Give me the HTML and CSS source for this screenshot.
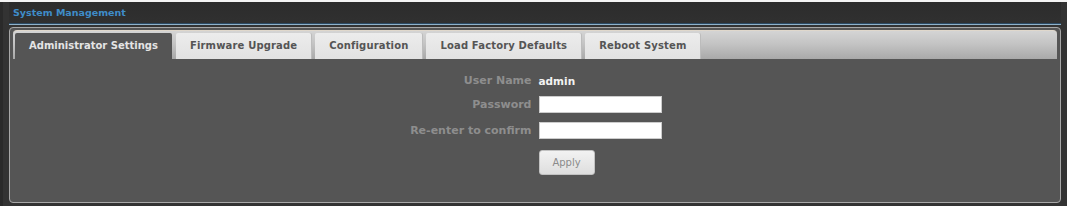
FILE: index.html
```html
<!DOCTYPE html>
<html lang="en">
<head>
  <meta charset="UTF-8" />
  <title>System Management</title>
  <link rel="stylesheet" href="styles.css">
</head>
<body>

<div class="frame">
  <div class="title-bar">System Management</div>

  <div class="panel">
    <div class="tabs">
      <div class="tab active">Administrator Settings</div>
      <div class="tab">Firmware Upgrade</div>
      <div class="tab">Configuration</div>
      <div class="tab">Load Factory Defaults</div>
      <div class="tab">Reboot System</div>
    </div>

    <div class="content">
      <form class="form">
        <label>User Name</label>
        <span class="value">admin</span>

        <label for="pw">Password</label>
        <input type="password" id="pw">

        <label for="pw2">Re-enter to confirm</label>
        <input type="password" id="pw2">

        <span></span>
        <button type="button" class="apply">Apply</button>
      </form>
    </div>
  </div>
</div>

</body>
</html>
```

FILE: styles.css
```css
body {
  margin: 0;
  padding: 0;
  background: #f4f4f4;
  font-family: "DejaVu Sans", Verdana, sans-serif;
}

.frame {
  margin-top: 2px;
  height: 204px;
  background: #333;
  padding: 0 6px 0 6px;
  box-sizing: border-box;
  border-left: 3px solid #2a2a2a;
}

.title-bar {
  height: 21px;
  line-height: 22px;
  padding-left: 4px;
  font-size: 9.5px;
  font-weight: bold;
  color: #3f8cc8;
  background: linear-gradient(#2c2c2c, #303030);
  border-bottom: 1px solid #2c4a63;
  box-shadow: 0 1px 0 #8fb1c9;
}

.panel {
  margin-top: 3px;
  height: 176px;
  box-sizing: border-box;
  border: 1px solid #a8a8a8;
  border-radius: 4px;
  background: #555;
  padding: 2px 3px 0 3px;
}

/* Tab strip */
.tabs {
  display: flex;
  align-items: flex-end;
  height: 28px;
  padding-left: 2px;
  background: linear-gradient(#d4d4d4, #c4c4c4 45%, #a9a9a9);
  border-radius: 4px 4px 0 0;
  border-top: 1px solid #e0d8cc;
}

.tab {
  height: 26px;
  line-height: 26px;
  padding: 0 14px;
  margin-right: 4px;
  font-size: 10px;
  font-weight: bold;
  letter-spacing: 0.15px;
  color: #555;
  background: linear-gradient(#ececec, #e2e2e2);
  border-radius: 2px 2px 0 0;
  box-shadow: 1px 0 0 #bcbcbc;
}

.tab.active {
  letter-spacing: 0;
  background: #555;
  color: #e4e4e4;
  box-shadow: none;
}

/* Form */
.content {
  padding-top: 15px;
}

.form {
  display: grid;
  grid-template-columns: 1fr 1fr;
  column-gap: 7px;
  row-gap: 9px;
  align-items: center;
  font-size: 11px;
  font-weight: bold;
}

.form label {
  text-align: right;
  color: #8e8e8e;
}

.value {
  color: #f2f2f2;
  font-size: 10.5px;
}

.form input {
  width: 123px;
  height: 17px;
  box-sizing: border-box;
  border: 1px solid #ccc;
  background: #fff;
  margin: 0;
}

.apply {
  width: 56px;
  height: 25px;
  margin-top: 2px;
  border: 1px solid #c2c2c2;
  border-radius: 3px;
  background: linear-gradient(#f2f2f2, #dedede);
  color: #8a8a8a;
  font-family: "DejaVu Sans", Verdana, sans-serif;
  font-size: 10px;
}
```
